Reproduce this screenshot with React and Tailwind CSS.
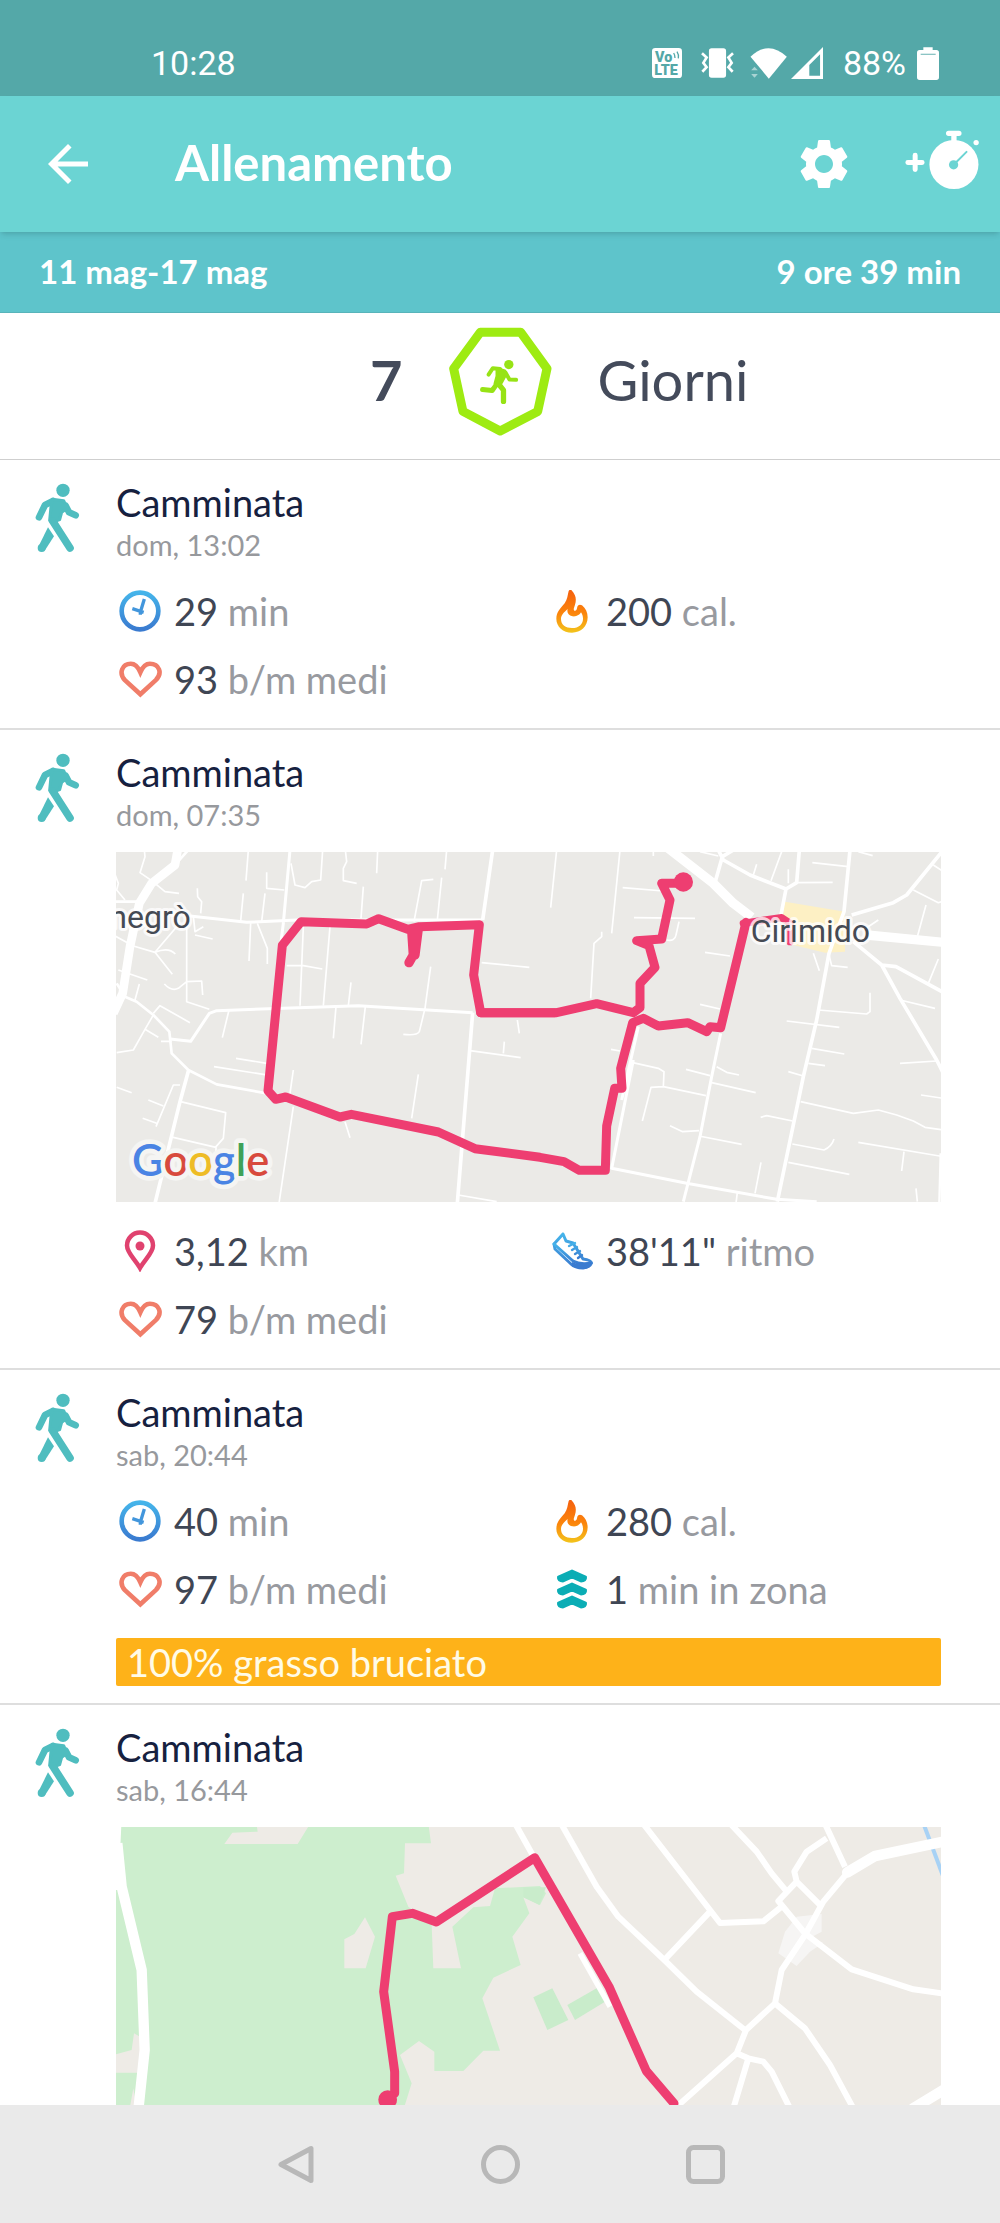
import React from "react";
import { MdArrowBack, MdSettings } from "react-icons/md";

const LATO = "font-['Lato',sans-serif]";

/* ---------- status bar ---------- */

function StatusBar() {
  return (
    <div className="flex h-24 items-end justify-between bg-[#54a8a8] pr-[61px] pb-3 pl-[151px] font-['Roboto',sans-serif] text-[34px] leading-[42px] text-white">
      <span>10:28</span>
      <div className="flex items-center">
        <svg className="mr-[19px] h-[30px] w-[30px]" viewBox="0 0 90 90" role="img" aria-label="VoLTE">
          <rect width="90" height="90" rx="10" fill="#fff" />
          <g fill="#54a8a8" fontFamily="Roboto, sans-serif" fontWeight="900">
            <text x="9" y="41" fontSize="43">Vo</text>
            <text x="7" y="80" fontSize="43">LTE</text>
          </g>
          <path d="M65 15q4 6 4 15M75 11q6 9 4 20" fill="none" stroke="#54a8a8" strokeWidth="4" />
        </svg>
        <svg className="mr-4 h-[30px] w-[33px]" viewBox="610 148 98 91" aria-hidden="true">
          <rect x="633" y="149" width="52" height="89" rx="8" fill="#fff" />
          <path d="M612 164l14 13-10 16 10 13-13 14M706 164l-14 13 10 16-10 13 13 14" fill="none" stroke="#fff" strokeWidth="8" />
        </svg>
        <svg className="mr-1 h-[31px] w-[37px]" viewBox="756 143 110 93" aria-hidden="true">
          <path d="M757 169Q811 118 866 169L812 235Z" fill="#fff" />
          <path d="M759 210l10-11 10 11zM759 221l10 11 10-11z" fill="#a9d3d3" />
        </svg>
        <svg className="mr-5 h-8 w-8" viewBox="878 143 98 98" aria-hidden="true">
          <path fillRule="evenodd" d="M976 143V241H878ZM967 165L934 198V231H967Z" fill="#fff" />
        </svg>
        <span>88%</span>
        <svg className="ml-[11px] h-[33px] w-[22px]" viewBox="1251 138 66 99" aria-hidden="true">
          <path d="M1270 139h28v8h11q8 0 8 8v74q0 8-8 8h-50q-8 0-8-8v-74q0-8 8-8h11z" fill="#fff" />
          <path d="M1262 160h45" stroke="#8cc4c4" strokeWidth="4" />
        </svg>
      </div>
    </div>
  );
}

/* ---------- icons ---------- */

function StopwatchIcon() {
  return (
    <svg className="h-[59px] w-[74px]" viewBox="1214 386 222 178" aria-hidden="true">
      <circle cx="1361" cy="490" r="74" fill="#fff" />
      <path d="M1345 396h31M1361 400v20" stroke="#fff" strokeWidth="16" strokeLinecap="round" />
      <path d="M1222 484h43M1244 462v43" stroke="#fff" strokeWidth="15" strokeLinecap="round" />
      <circle cx="1428" cy="424" r="8" fill="#fff" />
      <circle cx="1360" cy="491" r="14" fill="#6bd4d3" />
      <path d="M1364 487L1399 452" stroke="#6bd4d3" strokeWidth="6" strokeLinecap="round" />
    </svg>
  );
}

function RunBadge() {
  return (
    <svg className="h-[109px] w-[103px]" viewBox="446 80 310 328" role="img" aria-label="Corsa">
      <path
        d="M540 96H662L741 205L713 334L600 393L488 334L460 205Z"
        fill="none"
        stroke="#9eeb12"
        strokeWidth="27"
        strokeLinejoin="round"
      />
      <g stroke="#97e315" fill="none" strokeLinecap="round" strokeLinejoin="round">
        <circle cx="626" cy="193" r="14" fill="#97e315" stroke="none" />
        <path d="M565 223L578 204L600 206" strokeWidth="12" />
        <path d="M616 217L628 238L648 239" strokeWidth="12" />
        <path d="M547 268L576 271L588 254" strokeWidth="15" />
        <path d="M594 250L610 270L610 304" strokeWidth="16" />
        <path d="M590 204L614 212L618 222L606 244L598 258L584 250L590 228Z" fill="#97e315" strokeWidth="8" />
      </g>
    </svg>
  );
}

function WalkIcon() {
  return (
    <svg className="h-[70px] w-[45px]" viewBox="106 70 135 210" role="img" aria-label="Camminata">
      <g fill="#4fbdbf" stroke="#4fbdbf" strokeLinecap="round" strokeLinejoin="round">
        <circle cx="190" cy="92" r="20" stroke="none" />
        <path d="M118 173L136 136L160 124" fill="none" strokeWidth="20" />
        <path d="M198 138L208 158L228 167" fill="none" strokeWidth="20" />
        <path d="M158 119L192 123L203 146L186 158L180 180L158 188L150 182L154 140Z" strokeWidth="9" />
        <path d="M159 184L211 265" fill="none" strokeWidth="23" />
        <path d="M145 203L163 230L137 270L126 266L116 261Z" stroke="none" />
        <circle cx="126" cy="265" r="12" stroke="none" />
      </g>
    </svg>
  );
}

function ClockIcon() {
  return (
    <svg className="h-[42px] w-[42px]" viewBox="358 391 126 126" aria-hidden="true">
      <defs>
        <linearGradient id="clock" x1="0" y1="0" x2="0" y2="1">
          <stop offset="0" stopColor="#45b4ea" />
          <stop offset="1" stopColor="#3a7bd0" />
        </linearGradient>
      </defs>
      <circle cx="421" cy="454" r="55" fill="none" stroke="url(#clock)" strokeWidth="14" />
      <path d="M434 418L422 458M398 447L432 458M422 452v13" stroke="#4296dc" strokeWidth="10" fill="none" />
    </svg>
  );
}

function HeartIcon() {
  return (
    <svg className="h-[37px] w-[43px]" viewBox="356 602 131 112" aria-hidden="true">
      <path
        d="M421 703L374 660C354 638 366 610 392 610C408 610 415 622 421 636C427 622 434 610 450 610C478 610 490 638 468 660Z"
        fill="none"
        stroke="#f07d69"
        strokeWidth="14"
      />
    </svg>
  );
}

function FlameIcon() {
  return (
    <svg className="h-[43px] w-8" viewBox="171 60 96 129" aria-hidden="true">
      <defs>
        <linearGradient id="flame" x1="0" y1="0" x2="0" y2="1">
          <stop offset="0" stopColor="#f5600f" />
          <stop offset="0.55" stopColor="#fb850c" />
          <stop offset="1" stopColor="#f3c41c" />
        </linearGradient>
      </defs>
      <path
        fillRule="evenodd"
        fill="url(#flame)"
        d="M217 60C231 75 233 88 228 104C226 112 222 118 226 122C231 124 234 118 235 110C237 104 243 102 249 106C260 115 266 128 266 142C266 170 245 188 219 188C192 188 172 170 172 146C172 126 185 115 197 100C205 88 206 75 209 63C211 59 214 58 217 60ZM206 117C195 127 186 135 186 147C186 165 200 174 219 174C240 174 252 162 252 146C252 139 250 133 246 127C243 134 232 141 220 139C208 136 203 128 206 117Z"
      />
    </svg>
  );
}

function PinIcon() {
  return (
    <svg className="h-[42px] w-8" viewBox="0 0 32 42" aria-hidden="true">
      <path d="M16 38C11 29 3 23 3 15.500A13 13 0 0 1 29 15.500C29 23 21 29 16 38Z" fill="none" stroke="#e0426f" strokeWidth="4.500" />
      <circle cx="16" cy="16" r="4.500" fill="#e0426f" />
    </svg>
  );
}

function ShoeIcon() {
  return (
    <svg className="h-[38px] w-[42px]" viewBox="0 0 42 38" aria-hidden="true">
      <defs>
        <linearGradient id="shoe" x1="0" y1="0" x2="0" y2="1">
          <stop offset="0" stopColor="#45b4ea" />
          <stop offset="1" stopColor="#3a7bd0" />
        </linearGradient>
      </defs>
      <g fill="none" stroke="url(#shoe)" strokeWidth="3" strokeLinejoin="round" strokeLinecap="round">
        <path d="M12 2L3 12L4 17L20 32Q24 36 32 36Q39 35 40.500 31Q40 28 32 27L22 11L15 9Z" />
        <path d="M3 12L22 29Q29 33 40 31" />
        <path d="M18 14L24 11M21 18L26 15M24 22L29 19M27 26L31 23" strokeWidth="2.400" />
      </g>
      <path d="M21 30Q29 34 40 30Q41 36 33 37Q25 37 21 34Z" fill="#3a7bd0" />
    </svg>
  );
}

function ZoneIcon() {
  return (
    <svg className="h-10 w-8" viewBox="0 0 32 40" aria-hidden="true">
      <g fill="#0badb5" stroke="#0badb5" strokeWidth="3" strokeLinejoin="round">
        <path d="M2.500 8L16 2L29.500 8Q30 12 25 12L16 8L7 12Q2 12 2.500 8Z" />
        <path d="M2.500 21L16 15L29.500 21Q30 25 25 25L16 21L7 25Q2 25 2.500 21Z" />
        <path d="M2.500 34L16 28L29.500 34Q30 38 25 38L16 34L7 38Q2 38 2.500 34Z" />
      </g>
    </svg>
  );
}

/* ---------- maps ---------- */

function MapCirimido() {
  return (
    <svg
      className="block h-auto w-full"
      viewBox="0 0 2475 1050"
      role="img"
      aria-label="Percorso vicino a Cirimido"
    >
      <rect width="2475" height="1050" fill="#ebeae7" />
      <g fill="none" stroke="#fff" strokeLinejoin="round">
        {/* western half */}
        <g transform="translate(-18 -36)">
          <path d="M203 30L195 75L125 130L88 190L60 320L38 460L10 520" strokeWidth="26" />
          <path d="M235 30L190 80M18 185H90M20 430L45 470L80 485L130 525L178 575L185 640L235 690L320 733L470 760" strokeWidth="8" />
          <path d="M240 228L410 247L560 240L1115 240M540 30L520 250L510 330" strokeWidth="9" />
          <path d="M180 597L242 604L298 520L320 512L520 505L745 497L1088 518" strokeWidth="9" />
          <path d="M1148 30L1118 240M1088 518L1042 1090M236 690L210 785L135 1090" strokeWidth="11" />
          <g strokeWidth="5">
            <path d="M103 30L105 50L90 98L125 122L165 155L207 160M10 90L25 130L20 150L45 180M10 285L70 318L135 337L187 403M135 337L200 260M135 337Q175 320 196 342M25 390L112 420M88 432L75 480M262 145L263 170L275 185L272 220" />
            <path d="M230 260L230 485L298 508M230 425L275 423L278 465M163 432Q185 455 205 445L230 425M130 520L150 497L240 548M105 568L70 630L20 638M105 568L145 592M105 568L130 525M153 604H185" />
            <path d="M415 30L408 122M400 160L392 243M465 160L455 245M422 250L417 363M442 250L472 325V372M470 97V145L523 150M543 70L555 135L585 143L605 125L632 120L638 30M706 30L710 65L700 85V122L740 130M803 30L800 100M760 140L753 235M970 118L935 122L912 245M995 113L982 240M1010 30L1005 88" />
            <path d="M580 260L570 497M660 260L640 497M530 377H580L637 387M723 427L715 497M678 500L670 595M766 500L753 613M962 380L945 505L928 575Q920 588 880 583M357 510L337 593M1115 368L1258 382M1222 540L1228 580M1080 632L1232 653M1183 605L1180 640" />
            <path d="M378 655L470 670M312 680L465 704M550 690L540 760M550 800L507 1090M925 703L905 835M705 845L720 893M210 735H190L138 860M115 780L160 798M98 835L140 850M212 785L347 818L340 895L318 920V960M180 890L318 922M20 742L65 758M1045 1065L1160 1085M250 228L255 275L280 260M255 285L308 297" />
          </g>
        </g>
        {/* eastern half */}
        <g transform="translate(1242 -36)">
          <path d="M765 185L945 215V335L885 338L790 315L755 250Z" fill="#fdf0c4" stroke="none" />
          <path d="M415 25L550 130L610 190L665 232M1010 285L1240 307" strokeWidth="28" />
          <path d="M553 135L577 50L610 30M565 30L580 60L660 105L768 147L800 128L808 30M768 147L752 230M960 30L942 215L897 340L860 540L820 710L742 1085" strokeWidth="11" />
          <path d="M965 225L1090 188L1130 165L1240 30M970 305L1055 375L1110 475L1220 660L1240 700M1055 375L1098 380L1240 457" strokeWidth="11" />
          <path d="M572 580L545 710L510 890L460 1085M310 660L245 985L470 1030L740 1078L860 1085M325 560L275 780" strokeWidth="9" />
          <path d="M1232 940L1228 1090" strokeWidth="7" />
          <g strokeWidth="5">
            <path d="M80 30L62 203M270 30L245 280M278 143L400 153M312 233L495 235M370 30V48M510 35L565 48M215 275V290L192 310L182 475M410 300Q435 305 438 285L447 245M525 337L600 348M510 493L570 507" />
            <path d="M755 35L723 122M680 73L670 105M775 88V130M800 128L908 127M985 35L1028 47M847 68L955 80M1150 150L1225 188L1240 183M1188 195L1162 290M1210 75L1240 95M1045 240L1000 270M1225 357L1195 430M1110 480L1215 505M850 340L868 392M897 345L905 377L953 382M865 510L1010 522L1020 515V458" />
            <path d="M770 543L928 562M845 625L943 642M835 670L885 677M775 695L820 708M1110 670L1220 663M812 785L970 820L1045 810L1100 825L1150 843L1185 862L1240 870M1173 765L1240 775M692 832L710 827L788 843M787 912L882 930Q905 920 912 897M775 967L958 1003M985 907L1240 950M1122 935L1115 993M1158 1045L1162 1085M693 967L675 1060M622 1057L618 1090" />
            <path d="M243 628L270 633M305 667L385 685L402 695L400 740M337 843L363 742L400 740L528 767M468 688L540 707M560 680L590 697L627 705M545 728L677 758M420 857L458 875L507 872M507 888L635 913" />
          </g>
        </g>
      </g>
      <g fill="none" stroke="#ee3e71" strokeWidth="27" strokeLinecap="round" strokeLinejoin="round">
        <g transform="translate(-18 -36)">
          <path d="M1335 518H1112L1091 405L1108 254L928 260L893 268L806 236L770 252L573 245L517 316L474 752L497 778L527 771L690 831L724 823L985 876L1095 926L1290 952L1362 965L1408 991H1486L1490 858L1514 745H1536L1532 685L1568 548L1600 535L1645 558L1733 548L1790 575L1800 560L1832 563L1908 247" />
          <path d="M1112 518H1340L1460 491L1570 518L1590 503V430L1635 382L1617 317L1580 302L1655 297L1680 180L1655 130H1720" />
          <path d="M905 270L910 345L897 368M925 265L915 345" strokeWidth="28" />
          <path d="M1900 250L2015 233L2040 250L2040 305" strokeWidth="22" />
        </g>
      </g>
      <circle cx="1702" cy="90" r="29" fill="#ee3e71" />
      <g
        fontFamily="Roboto, sans-serif"
        fontSize="96"
        fill="#454a54"
        stroke="#fff"
        strokeOpacity="0.75"
        strokeWidth="18"
        strokeLinejoin="round"
        paintOrder="stroke"
      >
        <text x="-20" y="227">negrò</text>
        <text x="1904" y="269">Cirimido</text>
      </g>
      <text
        x="48"
        y="972"
        fontFamily="Lato, sans-serif"
        fontSize="130"
        fontWeight="600"
        stroke="#f5f5f3"
        strokeWidth="28"
        strokeLinejoin="round"
        paintOrder="stroke"
      >
        <tspan fill="#4a84e4">G</tspan>
        <tspan fill="#d84a3d">o</tspan>
        <tspan fill="#eebc26">o</tspan>
        <tspan fill="#4a84e4">g</tspan>
        <tspan fill="#3fa158">l</tspan>
        <tspan fill="#d84a3d">e</tspan>
      </text>
    </svg>
  );
}

function MapPark() {
  return (
    <svg className="block h-auto w-full" viewBox="0 0 2475 834" role="img" aria-label="Percorso nel parco">
      <rect width="2475" height="834" fill="#eeebe6" />
      <g transform="translate(-18 -51)">
        <path
          fill="#cdeece"
          d="M18 40H955L963 100H885L882 190L857 197L895 290L965 345L970 475H1053L1027 350L1090 292L1140 288L1155 235L1290 228L1308 250L1290 285L1240 262L1258 310L1207 380L1232 465L1150 503L1117 565L1170 722H1120L1060 783H973V725L927 693L870 735L905 820L880 900H18Z"
        />
        <g fill="#eeebe6">
          <path d="M440 45L443 65L367 68L343 102H563L598 45Z" />
          <path d="M765 322L795 380L767 475H703V388L733 372Z" />
          <path d="M18 733L65 720L72 670L90 680V788H18ZM70 835L60 890H80Z" />
        </g>
        <path d="M18 45H34L30 135L40 240H18Z" fill="#fff" />
        <path d="M22 100L35 230L95 480L104 720L85 900" fill="none" stroke="#fff" strokeWidth="31" />
        <path d="M1215 40L1268 135" stroke="#fff" strokeWidth="18" />
      </g>
      <g transform="translate(1242 -51)">
        <g fill="#c9eccb">
          <path d="M10 562L67 535L115 630L52 660Z" />
          <path d="M112 585L205 532L230 572L135 630Z" />
          <path d="M-20 232L48 232L28 285L-20 262Z" />
        </g>
        <path d="M1180 40L1240 200" stroke="#a8d2f5" strokeWidth="12" />
        <g fill="#f6f5f4">
          <path d="M800 320L875 312V365L838 385L880 398L840 425L800 468L745 430L765 365Z" />
        </g>
        <g fill="none" stroke="#fff" strokeWidth="18" strokeLinejoin="round">
          <path d="M90 35L200 230L265 320L403 450L500 545L645 660" />
          <path d="M335 35L540 300L570 339L700 334L755 290M540 305L403 450" />
          <path d="M600 40L680 125L725 190L768 242M890 85L830 125L793 185L800 215L745 273L825 370L965 478L1150 538L1240 551M800 215L875 290M882 35L945 170" />
          <path d="M955 185L880 275L825 375L755 480L735 580L648 660L620 730L440 890M735 580L825 655L900 765L970 895M620 730L655 745L610 895M655 745L700 755L725 785L780 895" />
        </g>
        <path d="M150 430L240 590" stroke="#fff" strokeWidth="16" />
        <path d="M952 187L1035 138L1240 95M1150 895L1240 840" fill="none" stroke="#fff" strokeWidth="32" strokeLinecap="round" />
      </g>
      <g transform="translate(-18 -51)" fill="none" stroke="#ee3e71" strokeWidth="27" strokeLinecap="round" strokeLinejoin="round">
        <path d="M854 850V785L821 545L847 320L907 310L979 336L1274 143L1497 530L1609 783L1692 880" />
        <circle cx="833" cy="869" r="28" fill="#ee3e71" stroke="none" />
      </g>
    </svg>
  );
}

/* ---------- activity list ---------- */

const ICONS = {
  clock: ClockIcon,
  heart: HeartIcon,
  flame: FlameIcon,
  pin: PinIcon,
  shoe: ShoeIcon,
  zone: ZoneIcon,
};

function Stat({ icon, value, unit }) {
  const Icon = ICONS[icon];
  return (
    <li className="flex h-[68px] items-center gap-2.5">
      <span className="flex w-12 justify-center">
        <Icon />
      </span>
      <span className="text-[38px] leading-[48px] whitespace-nowrap text-[#989a9f]">
        <span className="text-[#3f4654]">{value}</span> {unit}
      </span>
    </li>
  );
}

function Activity({ when, map, stats, bar, last }) {
  return (
    <article
      className={
        last
          ? "grid grid-cols-[116px_1fr] pt-4"
          : "grid grid-cols-[116px_1fr] border-b-2 border-[#dedede] pt-4 pb-[15px]"
      }
    >
      <div className="pt-[7px] pl-[35px]">
        <WalkIcon />
      </div>
      <div>
        <h2 className="text-[38px] leading-[52px] text-[#16213f]">Camminata</h2>
        <p className="text-[29px] leading-[34px] text-[#97999d]">{when}</p>
        {map && <div className="mt-5 mr-[59px] mb-[15px] last:mb-0">{map}</div>}
        {stats && (
          <ul className={map ? "mr-5 grid grid-cols-2" : "mt-[15px] mr-5 grid grid-cols-2"}>
            {stats.map((s) => (
              <Stat key={s.icon} {...s} />
            ))}
          </ul>
        )}
        {bar && (
          <div className="mt-[15px] mr-[59px] mb-0.5 rounded-xs bg-[#feb219] pl-[11px] text-[38px] leading-[48px] text-[#fffbe6]">
            {bar}
          </div>
        )}
      </div>
    </article>
  );
}

const ACTIVITIES = [
  {
    when: "dom, 13:02",
    stats: [
      { icon: "clock", value: "29", unit: "min" },
      { icon: "flame", value: "200", unit: "cal." },
      { icon: "heart", value: "93", unit: "b/m medi" },
    ],
  },
  {
    when: "dom, 07:35",
    map: <MapCirimido />,
    stats: [
      { icon: "pin", value: "3,12", unit: "km" },
      { icon: "shoe", value: "38'11\"", unit: "ritmo" },
      { icon: "heart", value: "79", unit: "b/m medi" },
    ],
  },
  {
    when: "sab, 20:44",
    stats: [
      { icon: "clock", value: "40", unit: "min" },
      { icon: "flame", value: "280", unit: "cal." },
      { icon: "heart", value: "97", unit: "b/m medi" },
      { icon: "zone", value: "1", unit: "min in zona" },
    ],
    bar: "100% grasso bruciato",
  },
  { when: "sab, 16:44", map: <MapPark />, last: true },
];

/* ---------- navigation bar ---------- */

function NavBar() {
  return (
    <nav className="mt-auto flex h-[118px] items-center justify-center gap-[166px] bg-[#eaeaea]">
      <button type="button" aria-label="Indietro">
        <svg className="h-[39px] w-[39px]" viewBox="0 0 39 39" fill="none" stroke="#b8b8b8" strokeWidth="5" strokeLinejoin="round">
          <path d="M35 3.500V35.500L5 19.500Z" />
        </svg>
      </button>
      <button type="button" aria-label="Home">
        <svg className="h-[39px] w-[39px]" viewBox="0 0 39 39" fill="none" stroke="#b8b8b8" strokeWidth="5">
          <circle cx="19.500" cy="19.500" r="17" />
        </svg>
      </button>
      <button type="button" aria-label="Recenti">
        <svg className="h-[39px] w-[39px]" viewBox="0 0 39 39" fill="none" stroke="#b8b8b8" strokeWidth="5">
          <rect x="2.500" y="2.500" width="34" height="34" rx="5" />
        </svg>
      </button>
    </nav>
  );
}

export default function App() {
  return (
    <div className={`flex min-h-screen flex-col bg-white ${LATO}`}>
      <StatusBar />
      <header className="relative flex h-[136px] items-center bg-[#6bd4d3] pr-[21px] pl-[38px] text-white shadow-md">
        <button type="button" aria-label="Indietro">
          <MdArrowBack className="h-[60px] w-[60px]" />
        </button>
        <h1 className="ml-[77px] pb-1 text-[49px] leading-[60px] font-bold">Allenamento</h1>
        <button type="button" aria-label="Impostazioni" className="mr-[51px] ml-auto">
          <MdSettings className="h-[60px] w-[60px]" />
        </button>
        <button type="button" aria-label="Aggiungi allenamento" className="pb-2.5">
          <StopwatchIcon />
        </button>
      </header>
      <main>
        <div className="flex h-[81px] items-center justify-between border-b border-[#58b4ba] bg-[#5ec4cb] px-[39px] pb-0.5 text-[33px] leading-10 font-bold text-white">
          <span>11 mag-17 mag</span>
          <span>9 ore 39 min</span>
        </div>
        <div className="grid grid-cols-[1fr_auto_1fr] items-center border-b border-[#cfcfcf] pt-3.5 pb-[23px] text-[56px] leading-[72px] text-[#444b5b]">
          <span className="mr-[46px] pb-1 text-right font-bold">7</span>
          <RunBadge />
          <span className="ml-[46px] pb-1">Giorni</span>
        </div>
        {ACTIVITIES.map((a) => (
          <Activity key={a.when} {...a} />
        ))}
      </main>
      <NavBar />
    </div>
  );
}
